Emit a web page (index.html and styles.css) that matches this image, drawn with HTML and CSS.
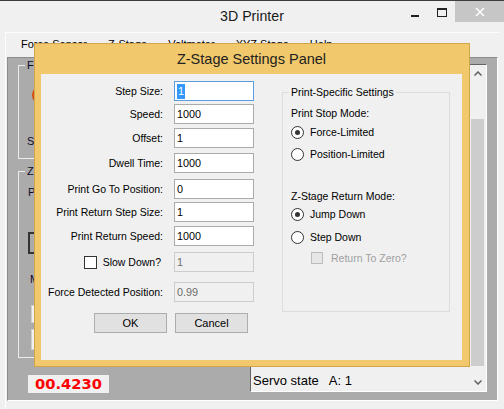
FILE: index.html
```html
<!DOCTYPE html>
<html>
<head>
<meta charset="utf-8">
<title>3D Printer</title>
<link rel="stylesheet" href="styles.css">
</head>
<body>
<div class="app">
  <div class="titlebar">
    <div class="apptitle">3D Printer</div>
    <div class="controls">
      <div class="ctl min"><span class="min-glyph"></span></div>
      <div class="ctl max"><span class="max-glyph"></span></div>
      <div class="ctl close">
        <svg width="10" height="10" viewBox="0 0 10 10"><path d="M1 1 L9 9 M9 1 L1 9" stroke="#ffffff" stroke-width="1.4" fill="none"/></svg>
      </div>
    </div>
  </div>
  <div class="client">
    <div class="menubar">
      <span>Force Sensor</span>
      <span>Z-Stage</span>
      <span>Voltmeter</span>
      <span>XYZ Stage</span>
      <span>Help</span>
    </div>
    <div class="mdi">
      <div class="leftpanel">
        <fieldset class="grp grp1">
          <legend>Force Sensor</legend>
          <div class="led"></div>
          <div class="bgtext s1">Sensor Reading:</div>
        </fieldset>
        <fieldset class="grp grp2">
          <legend>Z-Stage</legend>
          <div class="bgtext p1">Position:</div>
          <div class="darkbox"></div>
          <div class="bgtext m1">Move</div>
          <div class="bgbtn b1"></div>
          <div class="bgbtn b2"></div>
        </fieldset>
        <div class="readout">00.4230</div>
      </div>
      <div class="log">
        <div class="logtext"><span>Servo state   A: 1</span></div>
        <div class="vscroll">
          <div class="sarrow"><svg width="8" height="5" viewBox="0 0 8 5"><path d="M0.5 4.5 L4 1 L7.5 4.5" stroke="#606060" stroke-width="1.5" fill="none"/></svg></div>
          <div class="track"><div class="thumb"></div></div>
          <div class="sarrow"><svg width="8" height="5" viewBox="0 0 8 5"><path d="M0.5 0.5 L4 4 L7.5 0.5" stroke="#606060" stroke-width="1.5" fill="none"/></svg></div>
        </div>
      </div>
    </div>
  </div>

  <div class="dialog">
    <div class="dlg-title">Z-Stage Settings Panel</div>
    <div class="dlg-client">
      <div class="leftcol">
        <div class="form">
          <div class="lbl">Step Size:</div><div class="tb focus"><span class="sel">1</span></div>
          <div class="lbl">Speed:</div><div class="tb">1000</div>
          <div class="lbl">Offset:</div><div class="tb">1</div>
          <div class="lbl">Dwell Time:</div><div class="tb">1000</div>
          <div class="lbl">Print Go To Position:</div><div class="tb">0</div>
          <div class="lbl">Print Return Step Size:</div><div class="tb">1</div>
          <div class="lbl">Print Return Speed:</div><div class="tb">1000</div>
          <div class="lbl chklbl"><span class="chk"></span><span>Slow Down?</span></div><div class="tb dis">1</div>
          <div class="lbl">Force Detected Position:</div><div class="tb dis">0.99</div>
        </div>
        <div class="buttons">
          <div class="btn">OK</div>
          <div class="btn">Cancel</div>
        </div>
      </div>
      <fieldset class="settings">
        <legend>Print-Specific Settings</legend>
        <div class="sinner">
          <div class="row">Print Stop Mode:</div>
          <div class="row radio"><span class="rb on"></span><span>Force-Limited</span></div>
          <div class="row radio"><span class="rb"></span><span>Position-Limited</span></div>
          <div class="row">Z-Stage Return Mode:</div>
          <div class="row radio"><span class="rb on"></span><span>Jump Down</span></div>
          <div class="row radio"><span class="rb"></span><span>Step Down</span></div>
          <div class="row rtz"><span class="chk disabled"></span><span>Return To Zero?</span></div>
        </div>
      </fieldset>
    </div>
  </div>
</div>
</body>
</html>
```

FILE: styles.css
```css
* { box-sizing: border-box; }
html, body { margin: 0; padding: 0; }
body {
  width: 504px;
  height: 409px;
  overflow: hidden;
  font-family: "Liberation Sans", Arial, sans-serif;
  font-size: 10.5px;
  color: #000;
  background: #f0f0f0;
}
.app {
  position: relative;
  width: 504px;
  height: 409px;
  background: #f0f0f0;
}

/* main window title bar */
.titlebar {
  display: grid;
  height: 32px;
  border-top: 1px solid #3c3c3c;
}
.apptitle, .controls { grid-area: 1 / 1; }
.apptitle {
  font-size: 14.2px;
  color: #1a1a1a;
  text-align: center;
  line-height: 31px;
}
.controls {
  display: flex;
  justify-content: flex-end;
  align-items: flex-start;
}
.ctl {
  height: 21px;
  display: flex;
  align-items: center;
  justify-content: center;
}
.ctl.min { width: 26px; }
.ctl.max { width: 27px; }
.ctl.close { width: 49px; background: #c6c6c6; }
.min-glyph { width: 8px; height: 2px; background: #222; margin-top: 8px; }
.max-glyph {
  width: 10px; height: 9px;
  border: 1px solid #222; border-top-width: 2px;
  margin-top: 2px;
}
.ctl.close svg { margin-top: 1px; }

/* client area */
.client {
  margin: 0 5px;
  height: 377px;
  border-left: 1px solid #fdfdfd;
  border-top: 1px solid #fdfdfd;
}
.menubar {
  height: 24px;
  display: flex;
  gap: 21px;
  padding-left: 15px;
  font-size: 11px;
  line-height: 22px;
  color: #000;
}
.mdi {
  margin-left: 1px;
  width: 491px;
  height: 344px;
  border: 1px solid;
  border-color: #8c8c8c #ffffff #ffffff #8c8c8c;
  background: #ababab;
  display: flex;
}
.leftpanel {
  width: 242px;
  padding-left: 10px;
  display: flex;
  flex-direction: column;
}
.grp {
  margin: 0;
  padding: 0 0 0 6px;
  border: 1px solid #ececec;
  width: 222px;
  min-width: 0;
  display: flex;
  flex-direction: column;
  align-items: flex-start;
}
.grp legend {
  padding: 0 2px;
  line-height: 14px;
  font-size: 11px;
  color: #0a0a28;
}
.grp1 { height: 101px; }
.grp2 { height: 194px; margin-top: 5px; }
.led {
  width: 20px; height: 20px;
  border-radius: 50%;
  margin: 13px 0 0 7px;
  background: radial-gradient(circle at 60% 40%, #ff8a30, #d44a08 70%, #a83200);
}
.bgtext { font-size: 11px; line-height: 14px; color: #0a0a28; }
.s1 { margin: 29px 0 0 2px; }
.p1 { margin: 7px 0 0 3px; }
.darkbox {
  margin: 33px 0 0 3px;
  width: 110px; height: 22px;
  border: 2px solid #333;
}
.m1 { margin: 18px 0 0 5px; }
.bgbtn {
  margin-left: 6px;
  width: 80px;
  background: #f0f0f0;
  border: 1px solid #cfcfcf;
}
.b1 { margin-top: 19px; height: 18px; }
.b2 { margin-top: 6px; height: 21px; }
.readout {
  margin: 17px 0 0 10px;
  width: 81px;
  height: 18px;
  background: #f0f0f0;
  color: #ff0000;
  font-family: "DejaVu Sans", sans-serif;
  font-weight: bold;
  font-size: 14.7px;
  line-height: 18px;
  padding-left: 7px;
}

/* log text box */
.log {
  width: 237px;
  margin-top: 6px;
  height: 328px;
  border-left: 1px solid #646464;
  border-top: 1px solid #646464;
  border-right: 1px solid #ffffff;
  border-bottom: 1px solid #ffffff;
  background: #f0f0f0;
  display: flex;
}
.logtext {
  flex: 1;
  display: flex;
  align-items: flex-end;
  padding: 0 0 3px 2px;
  font-size: 13px;
  line-height: 15px;
  white-space: pre;
  color: #000;
}
.vscroll {
  width: 17px;
  display: flex;
  flex-direction: column;
  background: #f0f0f0;
}
.sarrow {
  height: 17px;
  display: flex;
  align-items: center;
  justify-content: center;
}
.track { flex: 1; display: flex; flex-direction: column; }
.thumb {
  flex: 1;
  margin: 37px 2px 8px 2px;
  background: #cdcdcd;
}

/* dialog window */
.dialog {
  position: absolute;
  left: 34px;
  top: 43px;
  width: 436px;
  height: 324px;
  background: #f1c86b;
  border: 1px solid #d2a44c;
  padding: 0 7px 6px 6px;
  display: flex;
  flex-direction: column;
}
.dlg-title {
  height: 30px;
  line-height: 30px;
  text-align: center;
  font-size: 14.5px;
  color: #222;
}
.dlg-client {
  flex: 1;
  background: #f0f0f0;
  display: grid;
  grid-template-columns: 241px 168px;
  align-items: start;
}
.form {
  display: grid;
  grid-template-columns: 122px 80px;
  column-gap: 11px;
  grid-template-rows: 23px 24px 25px 26px 23px 24px 26px 30px 20px;
  padding-top: 7px;
}
.lbl {
  height: 20px;
  line-height: 20px;
  text-align: right;
  white-space: nowrap;
}
.chklbl {
  display: flex;
  justify-content: flex-end;
  align-items: center;
  gap: 6px;
  padding-right: 2px;
}
.chk {
  width: 13px; height: 13px;
  border: 1px solid #333;
  background: #fff;
}
.chk.disabled { border-color: #bcbcbc; background: #e6e6e6; width: 12px; height: 12px; }
.tb {
  height: 20px;
  border: 1px solid #ababab;
  background: #fff;
  padding-left: 2px;
  line-height: 18px;
  font-size: 10.8px;
}
.tb.focus { border-color: #5a9ee0; }
.sel {
  display: inline-block;
  background: #3399ff;
  color: #fff;
  line-height: 15px;
  padding: 0 1px;
  vertical-align: middle;
  margin-top: -2px;
}
.tb.dis { background: #f0f0f0; border-color: #cccccc; color: #6d6d6d; }
.buttons {
  display: flex;
  gap: 8px;
  padding-left: 53px;
  margin-top: 11px;
}
.btn {
  width: 73px;
  height: 20px;
  border: 1px solid #adadad;
  background: #e1e1e1;
  text-align: center;
  line-height: 18px;
  font-size: 11px;
}
.settings {
  margin: 11px 0 0 0;
  width: 168px;
  height: 227px;
  min-width: 0;
  border: 1px solid #dcdcdc;
  padding: 0 0 0 6px;
}
.settings legend {
  padding: 0 2px;
  line-height: 14px;
}
.sinner {
  margin-top: 7px;
  padding-left: 2px;
  display: grid;
  grid-template-rows: 19px 22px 42px 18px 23px 21px 14px;
}
.row {
  height: 14px;
  line-height: 14px;
  white-space: nowrap;
}
.radio { display: flex; align-items: center; gap: 6px; }
.rb {
  width: 13px; height: 13px;
  border: 1px solid #333;
  border-radius: 50%;
  background: #fff;
  display: flex;
  align-items: center;
  justify-content: center;
}
.rb.on::after {
  content: "";
  width: 5px; height: 5px;
  border-radius: 50%;
  background: #333;
}
.rtz {
  display: flex;
  align-items: center;
  gap: 8px;
  padding-left: 20px;
  color: #a0a0a0;
}
```
